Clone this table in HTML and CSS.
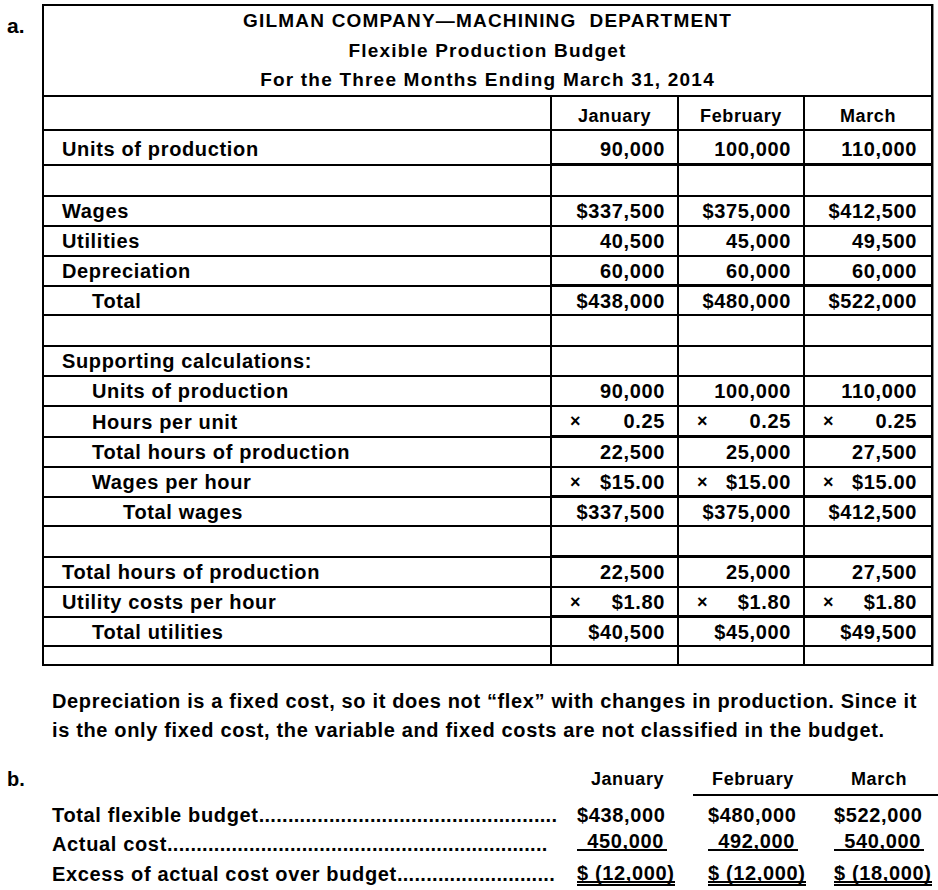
FILE: index.html
```html
<!DOCTYPE html>
<html lang="en">
<head>
<meta charset="utf-8">
<title>Gilman Company — Flexible Production Budget</title>
<link rel="stylesheet" href="styles.css">
</head>
<body>
<section class="part-a">
  <div class="marker">a.</div>
  <table class="budget">
    <colgroup>
      <col class="c-label"><col class="c-jan"><col class="c-feb"><col class="c-mar">
    </colgroup>
    <tr class="r-title">
      <td colspan="4" class="title">GILMAN COMPANY—MACHINING&nbsp; DEPARTMENT<br>Flexible Production Budget<br>For the Three Months Ending March 31, 2014</td>
    </tr>
    <tr class="r-head">
      <td class="label"></td><td class="head">January</td><td class="head">February</td><td class="head">March</td>
    </tr>
    <tr class="r-first thick">
      <td class="label">Units of production</td><td class="num">90,000</td><td class="num">100,000</td><td class="num">110,000</td>
    </tr>
    <tr class="r-blank">
      <td class="label"></td><td class="num"></td><td class="num"></td><td class="num"></td>
    </tr>
    <tr>
      <td class="label">Wages</td><td class="num">$337,500</td><td class="num">$375,000</td><td class="num">$412,500</td>
    </tr>
    <tr>
      <td class="label">Utilities</td><td class="num">40,500</td><td class="num">45,000</td><td class="num">49,500</td>
    </tr>
    <tr class="thick">
      <td class="label">Depreciation</td><td class="num">60,000</td><td class="num">60,000</td><td class="num">60,000</td>
    </tr>
    <tr class="r-total">
      <td class="label ind1">Total</td><td class="num">$438,000</td><td class="num">$480,000</td><td class="num">$522,000</td>
    </tr>
    <tr class="r-blank">
      <td class="label"></td><td class="num"></td><td class="num"></td><td class="num"></td>
    </tr>
    <tr>
      <td class="label">Supporting calculations:</td><td class="num"></td><td class="num"></td><td class="num"></td>
    </tr>
    <tr>
      <td class="label ind1">Units of production</td><td class="num">90,000</td><td class="num">100,000</td><td class="num">110,000</td>
    </tr>
    <tr class="r-tall thick">
      <td class="label ind1">Hours per unit</td><td class="num"><span class="op">×</span>0.25</td><td class="num"><span class="op">×</span>0.25</td><td class="num"><span class="op">×</span>0.25</td>
    </tr>
    <tr>
      <td class="label ind1">Total hours of production</td><td class="num">22,500</td><td class="num">25,000</td><td class="num">27,500</td>
    </tr>
    <tr class="thick">
      <td class="label ind1">Wages per hour</td><td class="num"><span class="op">×</span>$15.00</td><td class="num"><span class="op">×</span>$15.00</td><td class="num"><span class="op">×</span>$15.00</td>
    </tr>
    <tr class="r-total">
      <td class="label ind2">Total wages</td><td class="num">$337,500</td><td class="num">$375,000</td><td class="num">$412,500</td>
    </tr>
    <tr class="r-blank thick">
      <td class="label"></td><td class="num"></td><td class="num"></td><td class="num"></td>
    </tr>
    <tr>
      <td class="label">Total hours of production</td><td class="num">22,500</td><td class="num">25,000</td><td class="num">27,500</td>
    </tr>
    <tr class="thick">
      <td class="label">Utility costs per hour</td><td class="num"><span class="op">×</span>$1.80</td><td class="num"><span class="op">×</span>$1.80</td><td class="num"><span class="op">×</span>$1.80</td>
    </tr>
    <tr class="r-total">
      <td class="label ind1">Total utilities</td><td class="num">$40,500</td><td class="num">$45,000</td><td class="num">$49,500</td>
    </tr>
    <tr class="r-end">
      <td class="label"></td><td class="num"></td><td class="num"></td><td class="num"></td>
    </tr>
  </table>
</section>

<p class="note">Depreciation is a fixed cost, so it does not “flex” with changes in production. Since it<br>is the only fixed cost, the variable and fixed costs are not classified in the budget.</p>

<section class="part-b">
  <div class="marker">b.</div>
  <div class="hd jan">January</div>
  <div class="hd feb rule">February</div>
  <div class="hd mar rule">March</div>

  <div class="lbl">Total flexible budget<span class="dots">...................................................</span></div>
  <div class="val jan">$438,000</div>
  <div class="val feb">$480,000</div>
  <div class="val mar">$522,000</div>

  <div class="lbl">Actual cost<span class="dots">.................................................................</span></div>
  <div class="val jan"><span class="single">450,000</span></div>
  <div class="val feb"><span class="single">492,000</span></div>
  <div class="val mar"><span class="single">540,000</span></div>

  <div class="lbl">Excess of actual cost over budget<span class="dots">...........................</span></div>
  <div class="val jan"><span class="double">$ (12,000)</span></div>
  <div class="val feb"><span class="double">$ (12,000)</span></div>
  <div class="val mar"><span class="double">$ (18,000)</span></div>
</section>
</body>
</html>
```
FILE: styles.css
```css
* {
  box-sizing: border-box;
}

html,
body {
  margin: 0;
  padding: 0;
  background: #fff;
}

body {
  width: 938px;
  font-family: "Liberation Sans", Arial, sans-serif;
  font-weight: 700;
  font-size: 20px;
  letter-spacing: 0.65px;
  color: #000;
}

/* ---------- part a ---------- */

.part-a {
  display: flex;
  align-items: flex-start;
  padding-top: 4px;
}

.marker {
  width: 42px;
  padding-left: 7px;
  font-size: 21px;
  letter-spacing: 0;
}

.part-a .marker {
  padding-top: 10px;
  line-height: 24px;
}

.budget {
  width: 891px;
  table-layout: fixed;
  border-collapse: separate;
  border-spacing: 0;
  border: 2px solid #000;
  box-shadow: 1px 0 0 #8c8c8c;
}

.c-label { width: 508px; }
.c-jan { width: 127px; }
.c-feb { width: 126px; }
.c-mar { width: 126px; }

.budget td {
  height: 30px;
  padding: 0 12px 0 0;
  border-right: 2px solid #000;
  border-bottom: 2px solid #000;
  line-height: 22px;
  white-space: nowrap;
  vertical-align: middle;
}

.budget tr {
  height: 30px;
}

.budget td:last-child {
  border-right: 0;
  padding-right: 14px;
}

.budget tr:last-child td {
  border-bottom: 0;
}

.budget td.label {
  padding-left: 18px;
  text-align: left;
}

.budget td.label.ind1 {
  padding-left: 48px;
}

.budget td.label.ind2 {
  padding-left: 79px;
}

.budget td.num {
  text-align: right;
}

.thick td.num {
  border-bottom-width: 3px;
}

.op {
  float: left;
  margin-left: 18px;
  font-size: 18px;
  letter-spacing: 0;
}

/* row heights */
.budget tr.r-title,
.budget tr.r-title td { height: 91px; }
.budget tr.r-head,
.budget tr.r-head td { height: 34px; }
.budget tr.r-first,
.budget tr.r-first td { height: 35px; }
.budget tr.r-blank,
.budget tr.r-blank td,
.budget tr.r-tall,
.budget tr.r-tall td { height: 31px; }
.budget tr.r-total,
.budget tr.r-total td { height: 29px; }
.budget tr.r-end,
.budget tr.r-end td { height: 17px; }

.budget td.title {
  padding: 0;
  text-align: center;
  font-size: 19px;
  letter-spacing: 1.2px;
  line-height: 29.5px;
  vertical-align: top;
}

.budget td.head {
  padding: 6px 0 0 0;
  text-align: center;
  font-size: 18px;
  letter-spacing: 0.6px;
}

.r-first td {
  padding-top: 3px;
}

/* ---------- note ---------- */

.note {
  margin: 21px 0 0 52px;
  line-height: 29px;
  white-space: nowrap;
}

/* ---------- part b ---------- */

.part-b {
  display: grid;
  grid-template-columns: 52px 508px 133px 130px 115px;
  margin-top: 19.5px;
  line-height: 29.5px;
}

.part-b .marker {
  font-size: 20px;
}

.hd {
  font-size: 18px;
  letter-spacing: 0.6px;
  text-align: center;
  border-bottom: 2px solid transparent;
  margin-bottom: 4.5px;
}

.hd.jan {
  grid-column: 3;
  padding: 0 26px 0 28px;
}

.hd.feb {
  padding: 0 25px 0 15px;
}

.hd.mar {
  padding: 0 14px 0 11px;
}

.hd.rule {
  border-bottom-color: #000;
}

.lbl {
  grid-column: 2;
  white-space: nowrap;
}

.lbl .dots {
  letter-spacing: 0.3px;
}

.val {
  white-space: nowrap;
}

.val.jan { padding-left: 17px; }
.val.feb { padding-left: 15px; }
.val.mar { padding-left: 11px; }

.single {
  display: inline-block;
  width: 90px;
  padding-right: 3px;
  text-align: right;
  line-height: 16px;
  border-bottom: 2px solid #000;
  vertical-align: 3px;
}

.double {
  display: inline-block;
  line-height: 15px;
  border-bottom: 5px double #000;
  vertical-align: 1px;
}
```
